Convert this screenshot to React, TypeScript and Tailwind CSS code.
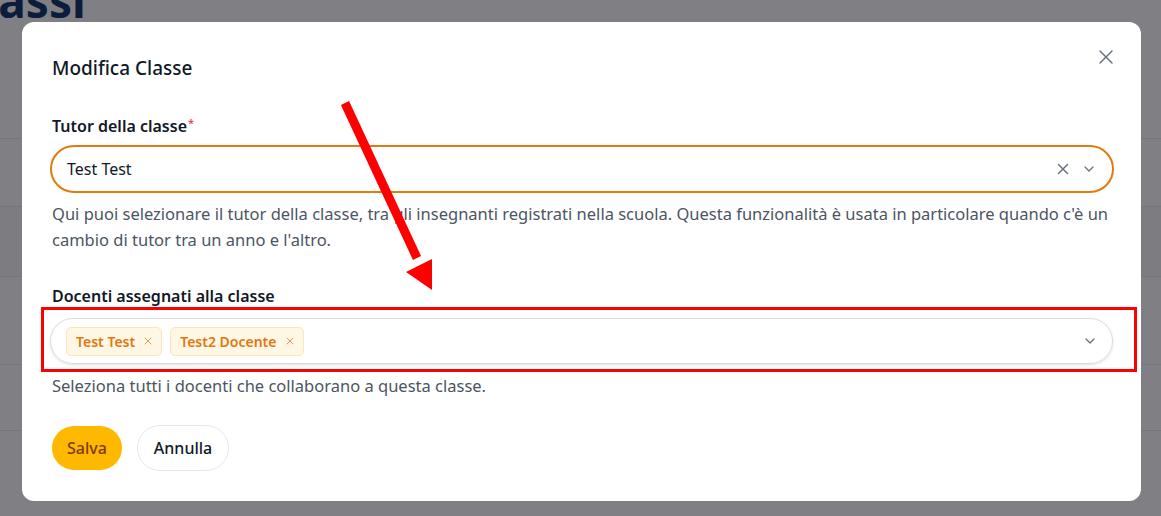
import * as React from "react";
import { X, ChevronDown } from "lucide-react";

function Tag({ label }: { label: string }) {
  return (
    <span className="flex h-[29px] items-center gap-[7px] rounded-[5px] border border-[#fbe6bd] bg-[#fef7e6] pl-[9px] pr-[7px] text-[14px] font-semibold text-[#e0780f]">
      {label}
      <X className="size-[12px] text-[#e79a55]" strokeWidth={2} />
    </span>
  );
}

export default function App() {
  return (
    <div
      className="relative h-[516px] w-[1161px] overflow-hidden bg-[#808084]"
      style={{ fontFamily: '"Noto Sans", "Open Sans", sans-serif' }}
    >
      {/* page behind the overlay */}
      <div className="flex flex-col">
        <div className="-ml-[45px] -mt-[22px] h-[44px] text-[46px] font-bold leading-[44px] text-[#0c1c3d]">Classi</div>
        <div className="h-[116px]" />
        <div className="h-[68px] border-t border-[#76767a]" />
        <div className="h-[70px] border-t border-[#76767a] bg-[#7d7d81]" />
        <div className="h-[88px] border-t border-[#76767a]" />
        <div className="h-[66px] border-t border-[#76767a]" />
        <div className="h-[86px] border-t border-[#76767a]" />
      </div>

      {/* modal */}
      <div className="absolute left-[22px] top-[22px] flex h-[479px] w-[1119px] flex-col rounded-[12px] bg-white pl-[28px] pr-[27px] pt-[34px]">
        <div className="flex items-start justify-between">
          <h2 className="pl-[2px] text-[19px] font-medium leading-[24px] text-[#111827]">Modifica Classe</h2>
          <button className="-mr-[4px] -mt-[11px] text-[#6b7280]">
            <X className="size-[24px]" strokeWidth={1.5} />
          </button>
        </div>

        <div className="mt-[35px] pl-[2px] text-[16px] font-semibold leading-[22px] text-[#111827]">
          Tutor della classe<sup className="ml-[1px] text-[11px] text-[#ef4444]">*</sup>
        </div>
        <div className="mt-[8px] flex h-[48px] items-center rounded-full border-2 border-[#e27a0c] pl-[15px] pr-[15px]">
          <span className="flex-1 text-[16px] text-[#111827]">Test Test</span>
          <X className="mr-[9px] size-[18px] text-[#6b7280]" strokeWidth={2} />
          <ChevronDown className="size-[16px] text-[#6b7280]" strokeWidth={2} />
        </div>
        <p className="mt-[8px] pl-[2px] text-[16.5px] leading-[26px] text-[#4b5563]">
          Qui puoi selezionare il tutor della classe, tra gli insegnanti registrati nella scuola. Questa funzionalità è usata in particolare quando c'è un cambio di tutor tra un anno e l'altro.
        </p>

        <div className="mt-[32px] pl-[2px] text-[16px] font-semibold leading-[22px] text-[#111827]">
          Docenti assegnati alla classe
        </div>
        <div className="-ml-[9px] -mr-[23px] border-[3px] border-[#ff0000] pb-[5px] pl-[6px] pr-[21px] pt-[8px]">
          <div className="flex h-[46px] items-center gap-[8px] rounded-full border border-[#dcdcdc] pl-[15px] pr-[14px] shadow-[0_1px_3px_rgba(0,0,0,0.12)]">
            <Tag label="Test Test" />
            <Tag label="Test2 Docente" />
            <span className="flex-1" />
            <ChevronDown className="size-[16px] text-[#6b7280]" strokeWidth={2} />
          </div>
        </div>
        <p className="mt-[1px] pl-[2px] text-[16.5px] leading-[26px] text-[#4b5563]">
          Seleziona tutti i docenti che collaborano a questa classe.
        </p>

        <div className="mt-[27px] flex gap-[15px] pl-[2px]">
          <button className="h-[44px] rounded-full bg-[#ffb800] px-[15px] text-[16px] font-medium text-[#7c3a0a]">Salva</button>
          <button className="-mt-[1px] h-[46px] rounded-full border border-[#e5e7eb] px-[16px] text-[16px] font-medium text-[#111827]">Annulla</button>
        </div>
      </div>

      {/* annotation arrow */}
      <svg className="absolute left-0 top-0" width="1161" height="516" viewBox="0 0 1161 516">
        <line x1="345" y1="103" x2="417" y2="258" stroke="#ff0000" strokeWidth="9" />
        <polygon points="406,272 432,290 432,259" fill="#ff0000" />
      </svg>
    </div>
  );
}
